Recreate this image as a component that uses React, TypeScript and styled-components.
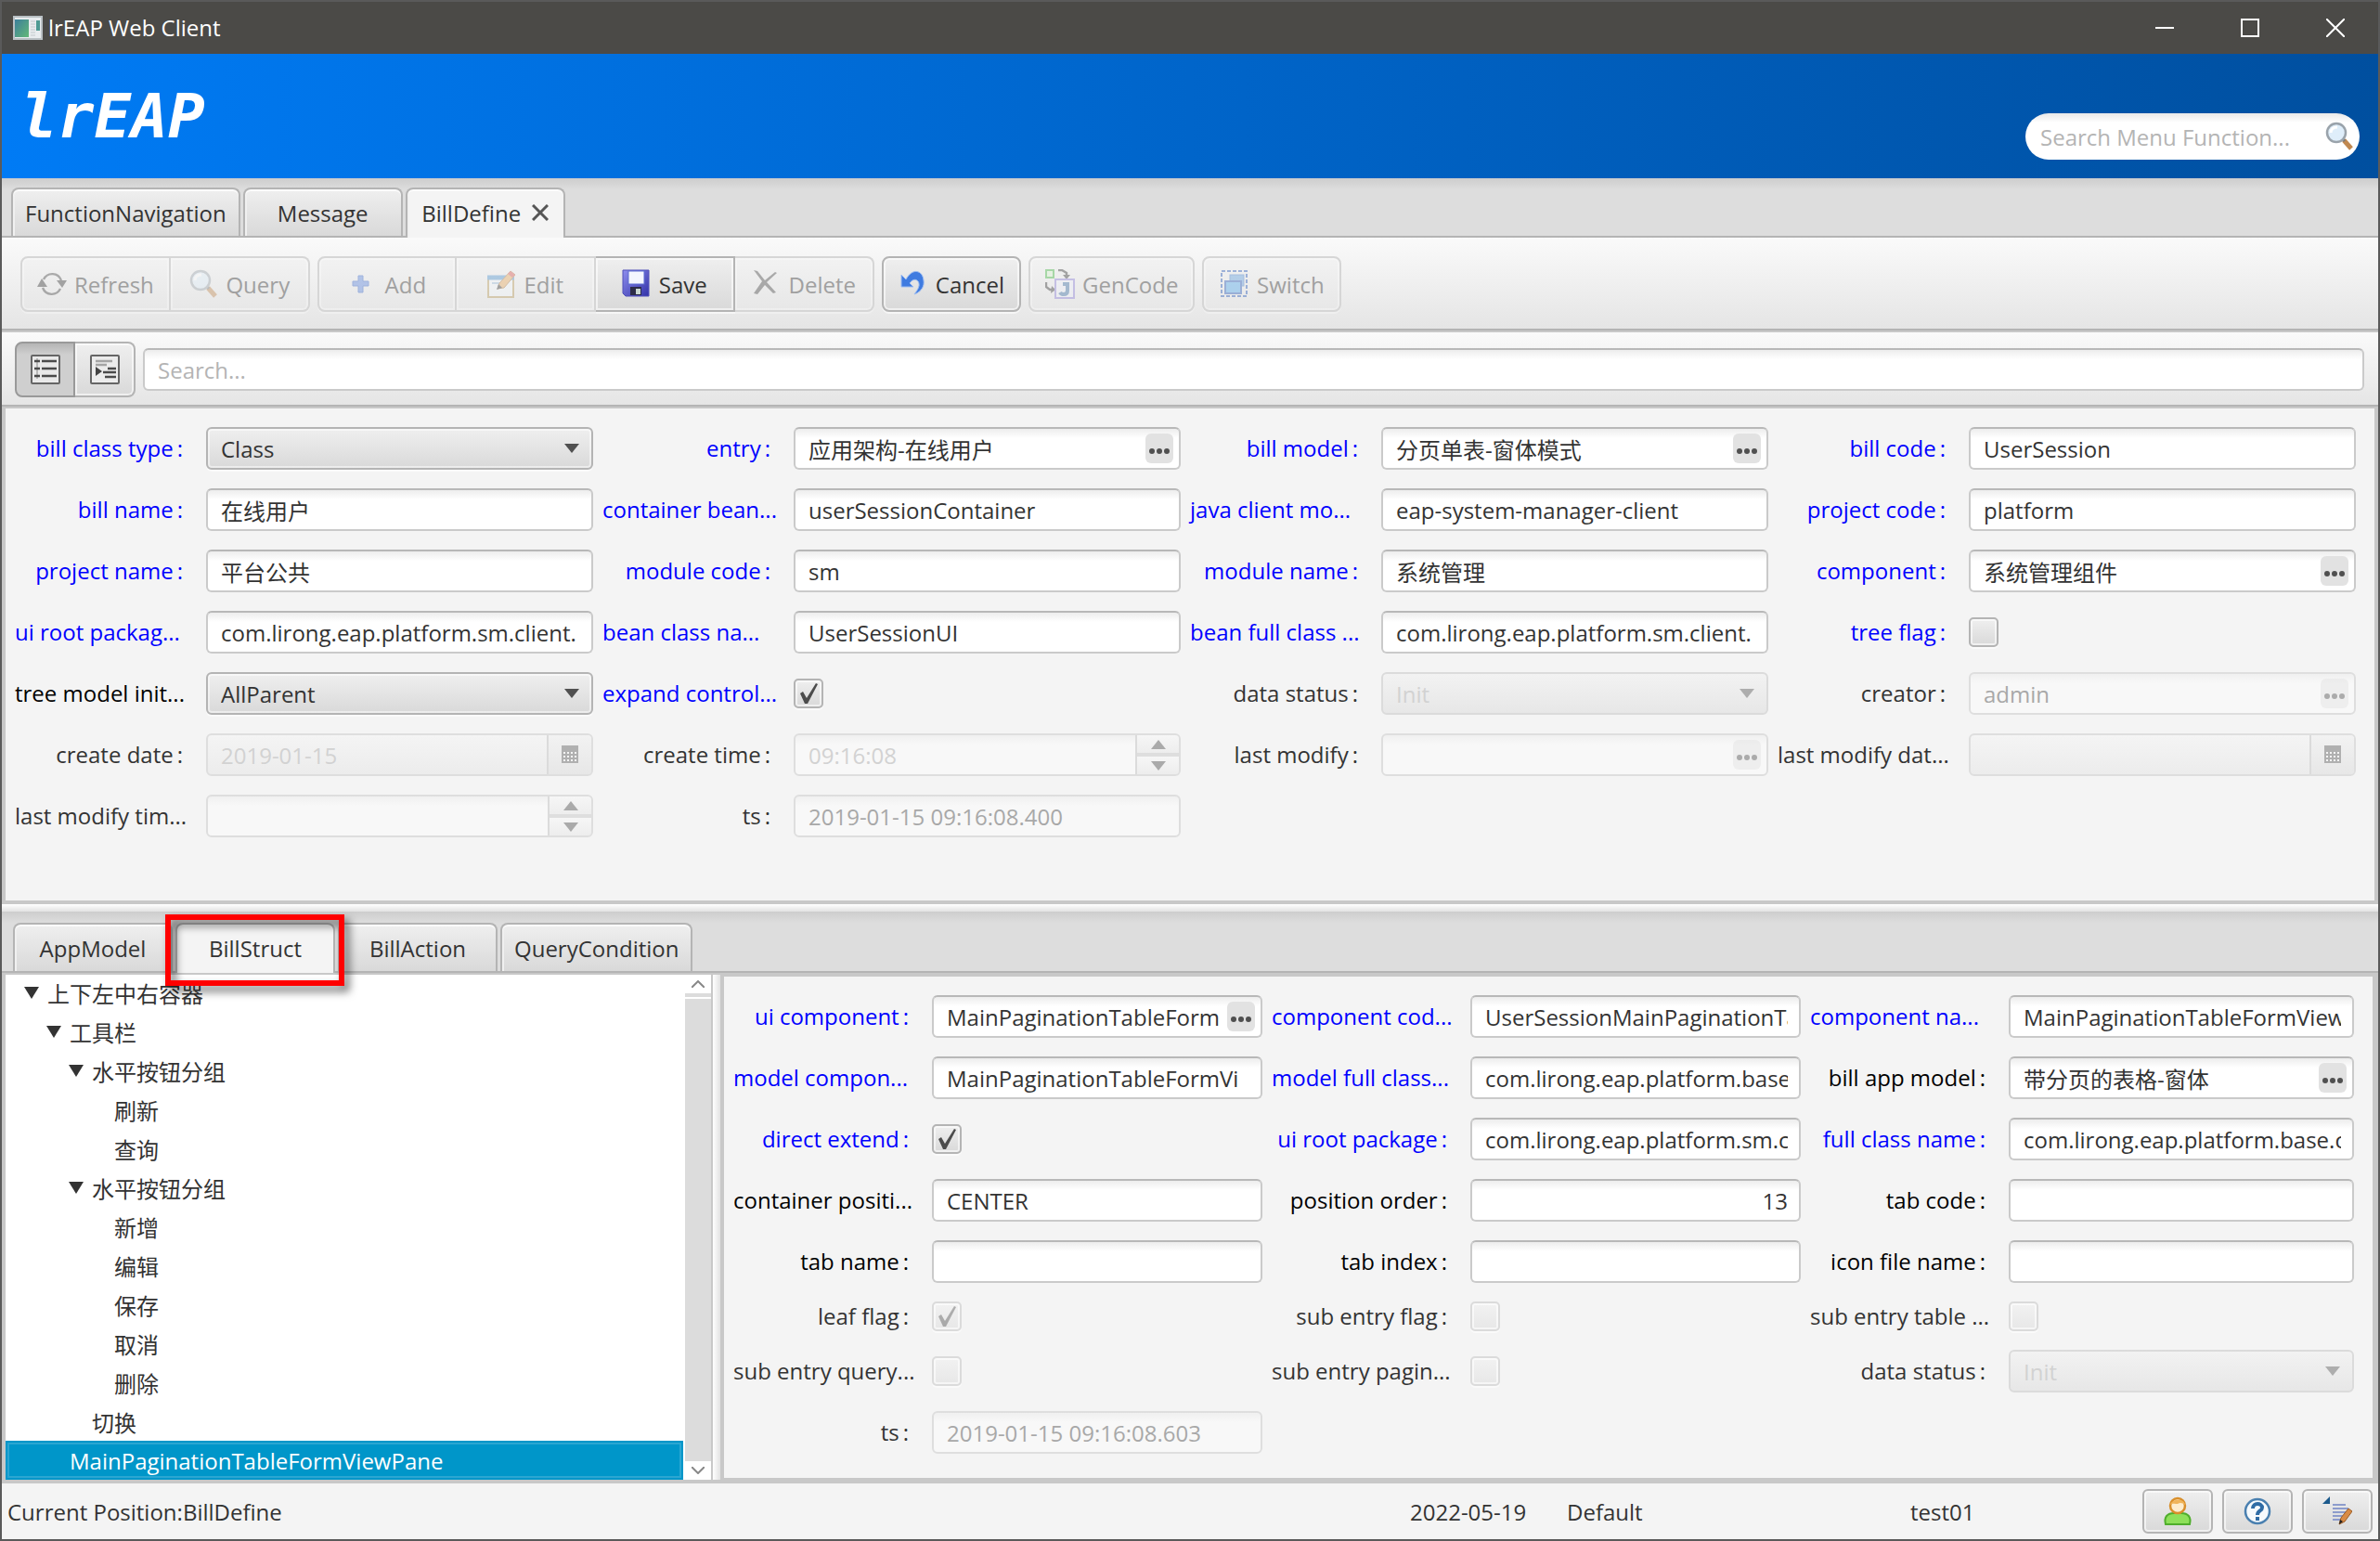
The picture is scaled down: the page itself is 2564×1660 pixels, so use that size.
import React, { useId } from 'react';
import styled, { createGlobalStyle, css } from 'styled-components';

const latin = '"Open Sans", "Noto Sans CJK SC", sans-serif';
const line = '#b4b4b4';
const edge = '#c8c8c8';
const pane = '#f4f4f4';
const raised = 'linear-gradient(#efefef, #d9d9d9)';
const faded = 'linear-gradient(#f2f2f2, #e7e7e7)';

const GlobalStyle = createGlobalStyle`
  * { box-sizing: border-box; }
  body { margin: 0; background: ${pane}; }
  body, button, input, select { font-family: ${latin}; font-size: 24px; color: #333; }
`;

const Window = styled.div`
  min-height: 100vh;
  display: flex;
  flex-direction: column;
  border: 2px solid #5a5a5a;
  background: ${pane};
`;

/* ---------- title bar and banner ---------- */

const TitleBar = styled.header`
  display: flex;
  align-items: center;
  gap: 6px;
  height: 56px;
  padding-left: 12px;
  background: #4b4a47;
  color: #fff;
`;

const TitleText = styled.h1`
  flex: 1;
  margin: 0;
  font-size: 24px;
  font-weight: 400;
  line-height: 32px;
`;

const WindowControls = styled.div`
  display: flex;
`;

const WindowButton = styled.button`
  width: 92px;
  height: 56px;
  padding: 0;
  border: 0;
  background: none;
  display: grid;
  place-items: center;
`;

const Banner = styled.div`
  display: flex;
  justify-content: space-between;
  height: 134px;
  padding: 20px;
  background: linear-gradient(90deg, #007bf5, #004f9f);
`;

const Logo = styled.div`
  font: italic 700 66px/96px "DejaVu Sans Mono", monospace;
  color: #fff;
`;

const MenuSearch = styled.label`
  align-self: flex-end;
  display: flex;
  align-items: center;
  width: 360px;
  height: 50px;
  padding: 0 6px 0 16px;
  border-radius: 25px;
  background: linear-gradient(#e8e8e8, #fff 10px);
`;

const BareInput = styled.input`
  flex: 1;
  min-width: 0;
  padding: 0;
  border: 0;
  outline: 0;
  background: none;
  &::placeholder { color: #b4b4b4; }
`;

/* ---------- tabs ---------- */

const TabStrip = styled.div<{ $lower?: boolean }>`
  display: flex;
  align-items: flex-end;
  gap: 3px;
  padding: ${p => (p.$lower ? '12px 12px 0' : '10px 10px 0')};
  border-bottom: 2px solid ${line};
  background: linear-gradient(#cdcdcd, #dddddd 12px);
`;

const Tab = styled.button<{ $selected?: boolean }>`
  display: flex;
  align-items: center;
  justify-content: center;
  gap: 12px;
  min-width: 172px;
  height: 52px;
  padding: 0 13px;
  border: 2px solid ${line};
  border-bottom: 0;
  border-radius: 8px 8px 0 0;
  background: ${raised};
  box-shadow: inset 0 2px #fbfbfb, inset 2px 0 #f0f0f0;
  ${p => p.$selected && css`
    height: 54px;
    margin-bottom: -2px;
    padding-bottom: 2px;
    background: ${pane};
  `}
`;

const TabAnchor = styled.div`
  position: relative;
  display: flex;
`;

const Highlight = styled.div`
  position: absolute;
  inset: -9px -10px -16px -11px;
  border: 6px solid #f00;
  filter: drop-shadow(5px 6px 5px rgba(0, 0, 0, 0.6));
  pointer-events: none;
  z-index: 2;
`;

/* ---------- toolbar ---------- */

const Toolbar = styled.div`
  display: flex;
  gap: 8px;
  height: 100px;
  padding: 20px;
  border-bottom: 2px solid ${line};
  background: linear-gradient(#fafafa, #e5e5e5);
`;

const ButtonGroup = styled.div`
  display: flex;
`;

const ToolButton = styled.button`
  display: flex;
  align-items: center;
  justify-content: center;
  gap: 8px;
  min-width: 150px;
  height: 60px;
  padding: 0 16px;
  border: 2px solid ${line};
  border-radius: 0;
  background: ${raised};
  box-shadow: inset 0 0 0 2px rgba(255, 255, 255, 0.6), 0 2px #f6f6f6;
  &:first-child { border-top-left-radius: 8px; border-bottom-left-radius: 8px; }
  &:last-child { border-top-right-radius: 8px; border-bottom-right-radius: 8px; }
  & + & { border-left: 0; }
  &:disabled {
    border-color: #d6d6d6;
    background: ${faded};
    box-shadow: inset 0 0 0 2px rgba(255, 255, 255, 0.3), 0 2px #efefef;
    color: #a0a0a0;
  }
  &:disabled svg { opacity: 0.4; }
`;

const FilterBar = styled.div`
  display: flex;
  align-items: center;
  gap: 8px;
  height: 82px;
  padding: 2px 15px 0 14px;
  border-top: 2px solid ${edge};
  border-bottom: 2px solid ${line};
  background: linear-gradient(#fafafa, #e5e5e5);
`;

const ModeButton = styled.button<{ $on?: boolean }>`
  display: grid;
  place-items: center;
  width: 65px;
  height: 60px;
  padding: 0;
  border: 2px solid ${line};
  border-radius: 0 8px 8px 0;
  background: ${raised};
  box-shadow: inset 0 0 0 2px rgba(255, 255, 255, 0.6);
  & + & { border-left: 0; }
  ${p => p.$on && css`
    border-color: #999;
    border-radius: 8px 0 0 8px;
    background: linear-gradient(#b5b5b5, #cfcfcf 12px);
    box-shadow: none;
  `}
`;

/* ---------- form controls ---------- */

const boxed = css`
  width: 100%;
  height: 46px;
  border: 2px solid #cacaca;
  border-top-color: #b8b8b8;
  border-radius: 6px;
`;

const Box = styled.div<{ $off?: boolean; $flat?: boolean }>`
  ${boxed}
  display: flex;
  align-items: center;
  flex: 1;
  min-width: 0;
  overflow: hidden;
  background: linear-gradient(#ededed, #fff 10px);
  ${p => p.$off && css`
    border-color: #dedede;
    background: ${p.$flat ? 'linear-gradient(#f4f4f4, #ececec)' : 'linear-gradient(#f0f0f0, #f8f8f8 10px)'};
  `}
`;

const TextInput = styled(BareInput)<{ $end?: boolean; $faint?: boolean; $tight?: boolean }>`
  height: 42px;
  margin-left: 14px;
  margin-right: ${p => (p.$tight ? '5px' : '12px')};
  text-align: ${p => (p.$end ? 'right' : 'left')};
  &:disabled { color: ${p => (p.$faint ? '#d2d2d2' : '#a8a8a8')}; }
`;

const MoreButton = styled.button`
  flex: none;
  display: grid;
  place-items: center;
  width: 30px;
  height: 32px;
  margin-right: 6px;
  padding: 6px 0 0;
  border: 0;
  border-radius: 6px;
  background: #e2e2e2;
  &:disabled { opacity: 0.45; }
`;

const SelectWrap = styled.div`
  flex: 1;
  min-width: 0;
  display: grid;
  align-items: center;
  & > * { grid-area: 1 / 1; }
  & > svg { justify-self: end; margin-right: 15px; pointer-events: none; }
`;

const Select = styled.select`
  ${boxed}
  appearance: none;
  padding: 0 14px;
  border-color: ${line};
  background: ${raised};
  box-shadow: inset 0 0 0 2px rgba(255, 255, 255, 0.5), 0 2px #fafafa;
  &:disabled {
    border-color: #dbdbdb;
    background: ${faded};
    box-shadow: none;
    color: #d2d2d2;
    opacity: 1;
  }
  &:disabled + svg { opacity: 0.4; }
`;

const SideButton = styled.button`
  flex: none;
  display: grid;
  place-items: center;
  width: 48px;
  height: 42px;
  padding: 0;
  border: 0;
  border-left: 2px solid #dbdbdb;
  background: ${faded};
`;

const Spinner = styled.div`
  flex: none;
  display: grid;
  grid-template-rows: 1fr 1fr;
  gap: 4px;
  width: 47px;
  height: 42px;
  border-left: 2px solid #dbdbdb;
  background: #dedede;
`;

const SpinButton = styled.button`
  display: grid;
  place-items: center;
  padding: 0;
  border: 0;
  background: linear-gradient(#f6f6f6, #ededed);
`;

const CheckWrap = styled.div`
  display: grid;
  width: 32px;
  height: 32px;
  & > * { grid-area: 1 / 1; }
  & > svg { pointer-events: none; }
`;

const Check = styled.input`
  appearance: none;
  width: 32px;
  height: 32px;
  margin: 0;
  border: 2px solid ${line};
  border-radius: 5px;
  background: ${raised};
  box-shadow: inset 0 0 0 2px rgba(255, 255, 255, 0.6), 0 2px #fafafa;
  &:disabled { border-color: #dbdbdb; background: ${faded}; }
  &:disabled + svg { opacity: 0.4; }
`;

const Form = styled.form<{ $columns: string; $foot: number }>`
  display: grid;
  grid-template-columns: ${p => p.$columns};
  gap: 20px 10px;
  align-content: start;
  padding: 20px 20px ${p => p.$foot}px 10px;
`;

const Cell = styled.div`
  display: flex;
  align-items: center;
  min-width: 0;
`;

type Tone = 'blue' | 'black' | 'grey';
const tones: Record<Tone, string> = { blue: '#0000ff', black: '#000', grey: '#333' };

const Label = styled.label<{ $tone: Tone; $cut: boolean; $wide?: boolean }>`
  flex: none;
  width: ${p => (p.$wide ? '214px' : '206px')};
  padding-right: ${p => (p.$cut ? '0' : '25px')};
  line-height: 32px;
  white-space: nowrap;
  text-align: ${p => (p.$cut ? 'left' : 'right')};
  color: ${p => tones[p.$tone]};
`;

const Colon = styled.span`
  margin-left: 4px;
`;

const TopForm = styled.section`
  border: solid ${edge};
  border-width: 2px 4px 4px;
`;

const HSplitter = styled.div`
  height: 8px;
  background: linear-gradient(#fff, #e2e2e2);
`;

/* ---------- lower area ---------- */

const Lower = styled.main`
  flex: 1;
  display: grid;
  grid-template-columns: minmax(0, 766fr) 8px minmax(0, 1786fr);
  border-top: 2px solid ${edge};
  border-bottom: 4px solid ${edge};
`;

const TreePane = styled.section`
  display: flex;
  border-left: 4px solid ${edge};
  border-right: 2px solid ${edge};
  background: #fff;
`;

const TreeList = styled.ul`
  flex: 1;
  display: flex;
  flex-direction: column;
  justify-content: flex-end;
  height: 544px;
  margin: 0;
  padding: 0;
  overflow: hidden;
  list-style: none;
`;

const TreeRow = styled.li<{ $level: number; $selected?: boolean }>`
  flex: none;
  display: flex;
  align-items: center;
  gap: 9px;
  height: 42px;
  padding-left: ${p => 20 + 24 * p.$level}px;
  ${p => p.$selected && css`
    margin-right: 2px;
    color: #fff;
    background: #0096c9;
    box-shadow: inset 0 0 0 2px #0096c9, inset 0 0 0 4px #2ba6d2;
  `}
`;

const ArrowSlot = styled.span`
  display: grid;
  place-items: center;
  width: 16px;
`;

const ScrollBar = styled.div`
  display: flex;
  flex-direction: column;
  width: 28px;
  background: #dcdcdc;
`;

const ScrollButton = styled.button`
  display: grid;
  place-items: center;
  height: 20px;
  padding: 0;
  border: 0;
  background: #fff;
`;

const ScrollThumb = styled.div`
  flex: 1;
  margin-top: 4px;
  border-top: 2px solid #fff;
`;

const VSplitter = styled.div`
  background: linear-gradient(90deg, #fff, #e2e2e2);
`;

const DetailPane = styled.section`
  border: solid ${edge};
  border-width: 2px 6px 2px 4px;
`;

const StatusBar = styled.footer`
  display: grid;
  grid-template-columns: 1511fr 169fr 370fr 250fr auto;
  align-items: center;
  height: 60px;
  padding: 0 6px;
`;

const StatusButtons = styled.div`
  display: flex;
  gap: 10px;
`;

const StatusButton = styled.button`
  display: grid;
  place-items: center;
  width: 76px;
  height: 48px;
  padding: 0;
  border: 2px solid ${line};
  border-radius: 6px;
  background: ${raised};
  box-shadow: inset 0 0 0 2px rgba(255, 255, 255, 0.6);
`;

/* ---------- drawings ---------- */

const Svg = ({ size = 32, children }: { size?: number; children: React.ReactNode }) => (
  <svg width={size} height={size} viewBox="0 0 32 32" fill="none" aria-hidden="true">{children}</svg>
);

const AppIcon = () => (
  <svg width="32" height="26" viewBox="0 0 32 26" aria-hidden="true">
    <defs>
      <linearGradient id="app" x1="0" y1="0" x2="1" y2="1">
        <stop offset="0" stopColor="#3c7f9c" /><stop offset="1" stopColor="#63b878" />
      </linearGradient>
    </defs>
    <rect x="1" y="1" width="30" height="24" fill="#e8ecef" stroke="#b9c0c4" strokeWidth="2" />
    <rect x="2" y="4" width="15" height="19" fill="url(#app)" />
    <path d="M19 6h5M19 9h5M19 12h5M19 15h5M19 18h5M19 21h5" stroke="#c2c8cc" />
    <rect x="25" y="5" width="4" height="11" fill="#4d9a93" />
  </svg>
);

const Magnifier = () => (
  <Svg>
    <path d="M21 20l8 9" stroke="#c08850" strokeWidth="5" />
    <path d="M19 18l3 3" stroke="#777" strokeWidth="3" />
    <circle cx="13" cy="12" r="10" fill="#dfeefa" stroke="#9aa3ab" strokeWidth="2.5" />
    <path d="M7 12c0-4 3-6 7-6" stroke="#fff" strokeWidth="3" />
  </Svg>
);

const RefreshIcon = () => (
  <Svg>
    <path d="M7 11A10.500 11 0 0 1 26 12M25 21A10.500 11 0 0 1 6 20" stroke="#444" strokeWidth="2.4" />
    <path d="M0 19l5-9 6 9zM21 12h11l-5 8z" fill="#333" />
  </Svg>
);

const AddIcon = () => (
  <Svg>
    <path d="M11 7h5v6h6v5h-6v7h-5v-7H5v-5h6z" fill="#5b86e0" stroke="#2f5fc4" />
  </Svg>
);

const EditIcon = () => (
  <Svg>
    <rect x="2" y="8" width="27" height="22" fill="#f3f8fc" stroke="#b89a58" strokeWidth="2" />
    <path d="M1 9h29" stroke="#4d93cf" strokeWidth="5" />
    <path d="M6 15h10" stroke="#9dbfdd" strokeWidth="2" />
    <path d="M12 21l2-6L26 2l5 4-12 14z" fill="#e9a95c" stroke="#a8763c" />
    <path d="M26 2l5 4-3 3-5-4z" fill="#d9534f" />
    <path d="M11 22l2-6 4 4z" fill="#333" />
  </Svg>
);

const SaveIcon = () => (
  <Svg>
    <defs>
      <linearGradient id="disk" x1="0" y1="0" x2="1" y2="1">
        <stop offset="0" stopColor="#8e8eee" /><stop offset="1" stopColor="#3232a8" />
      </linearGradient>
    </defs>
    <path d="M1 1h28v28H4l-3-3z" fill="url(#disk)" stroke="#5050b8" />
    <rect x="7" y="2" width="17" height="14" fill="#f4f6ff" stroke="#5c6cd0" />
    <rect x="9" y="19" width="12" height="9" fill="#2c2c48" />
    <rect x="15" y="21" width="5" height="6" fill="#c8d6d0" />
  </Svg>
);

const DeleteIcon = () => (
  <Svg>
    <path d="M2 1l4 1 8 10L25 3l2 1-11 10 10 11-3 1-9-9-8 10-4-1 9-13z" fill="#444" />
  </Svg>
);

const CancelIcon = () => (
  <Svg>
    <path d="M3 6v13h13l-4-4c5-7 11-3 10 3-1 4-3 6-5 9 8-3 11-9 10-15C26 1 15-2 8 11z" fill="#3f7be0" stroke="#9dbdf2" />
  </Svg>
);

const GenCodeIcon = () => (
  <Svg>
    <rect x="1" y="1" width="8" height="8" fill="#d8f5d0" stroke="#3db53d" strokeWidth="2" />
    <path d="M14 1h4l5 3v5M1 14v5l4 3h5" stroke="#333" strokeWidth="2.400" />
    <path d="M19 6h8l-4 5zM7 18l4 4-5 4z" fill="#333" />
    <rect x="11" y="11" width="20" height="20" fill="#eef0fb" stroke="#8b7ed8" strokeWidth="2" />
    <path d="M19 16h7M24 15v8q0 4-4 4-3 0-4-2" stroke="#3a6ea5" strokeWidth="4" />
  </Svg>
);

const SwitchIcon = () => (
  <Svg>
    <rect x="2" y="2" width="27" height="27" stroke="#2457b8" strokeWidth="2" strokeDasharray="4 2" />
    <rect x="11" y="6" width="15" height="12" fill="#5f9fe0" stroke="#3f78c6" />
    <rect x="6" y="13" width="17" height="13" fill="#4fa8ee" stroke="#2457b8" strokeWidth="2" />
  </Svg>
);

const ListIcon = () => (
  <svg width="34" height="32" viewBox="0 0 34 32" fill="none" aria-hidden="true">
    <rect x="2" y="1" width="30" height="30" rx="1" fill="#e9e9e9" stroke="#666" strokeWidth="2" />
    <path d="M8 4v22" stroke="#888" />
    <path d="M13 7h16M13 15h16M13 23h16M5 7h6M5 15h6M5 23h6" stroke="#4a4a4a" strokeWidth="2.400" />
  </svg>
);

const IndentIcon = () => (
  <svg width="34" height="32" viewBox="0 0 34 32" fill="none" aria-hidden="true">
    <rect x="2" y="1" width="30" height="30" rx="1" fill="#ececec" stroke="#666" strokeWidth="2" />
    <path d="M7 7h18M7 11h12" stroke="#a5a5a5" strokeWidth="2.400" />
    <path d="M20 15h9M15 19h14M17 24h12" stroke="#4a4a4a" strokeWidth="2.400" />
    <path d="M7 13l7 5-7 5z" fill="#444" />
  </svg>
);

const Caret = ({ w = 16, h = 10, up = false, fill = '#505050' }) => (
  <svg width={w} height={h} viewBox="0 0 16 10" preserveAspectRatio="none" aria-hidden="true">
    <path d={up ? 'M0 10h16L8 0z' : 'M0 0h16L8 10z'} fill={fill} />
  </svg>
);

const Dots = () => (
  <svg width="24" height="8" viewBox="0 0 24 8" fill="#505050" aria-hidden="true">
    <circle cx="4" cy="4" r="3" /><circle cx="12" cy="4" r="3" /><circle cx="20" cy="4" r="3" />
  </svg>
);

const CalendarIcon = () => (
  <svg width="18" height="20" viewBox="0 0 18 20" aria-hidden="true">
    <rect width="18" height="19" fill="#b0b0b0" />
    <path d="M2 8h14M2 12h14M2 16h14" stroke="#f4f4f4" strokeWidth="2" strokeDasharray="2 2" />
  </svg>
);

const CheckMark = () => (
  <Svg>
    <path d="M7 16l3-2 4 7L24 5l2 1-11 21h-3z" fill="#4c4c4c" />
  </Svg>
);

const UserIcon = () => (
  <Svg>
    <path d="M3 30c-2-8 2-12 9-12h8c7 0 11 4 9 12z" fill="#8ee05a" stroke="#4fae2c" strokeWidth="2" />
    <circle cx="16" cy="10" r="8" fill="#fdeccd" stroke="#d98f2b" strokeWidth="2.500" />
    <path d="M8 9c1-6 15-8 16 0-3-2-5-3-8-1-2 0-6-1-8 1z" fill="#f0b45a" />
  </Svg>
);

const HelpIcon = () => (
  <Svg>
    <circle cx="16" cy="16" r="13" fill="#f6fafd" stroke="#4a80b0" strokeWidth="2.500" />
    <path d="M11 13c0-7 10-6 10-1 0 4-5 3-5 8" stroke="#2f6ca5" strokeWidth="4" />
    <rect x="14" y="22" width="4" height="4" fill="#2f6ca5" />
  </Svg>
);

const NoteIcon = () => (
  <Svg>
    <path d="M0 8l8-8v8z" fill="#1c5a8c" />
    <path d="M11 9h14M11 13h17M11 17h15M11 21h11M11 25h9" stroke="#8d9ccc" strokeWidth="2" />
    <path d="M18 30l2-7 8-10 4 3-8 11z" fill="#d98b45" stroke="#9c5c24" />
    <path d="M18 30l1-5 3 2z" fill="#222" />
  </Svg>
);

/* ---------- fields ---------- */

type Kind = 'text' | 'lookup' | 'select' | 'check' | 'date' | 'time';
interface FieldSpec {
  label: string;
  kind?: Kind;
  value?: string;
  tone?: Tone;
  off?: boolean;
  end?: boolean;
  on?: boolean;
}

const Control = ({ id, spec }: { id: string; spec: FieldSpec }) => {
  const { kind = 'text', value = '', off, end, on } = spec;
  if (kind === 'check') {
    return (
      <CheckWrap>
        <Check id={id} type="checkbox" defaultChecked={on} disabled={off} />
        {on && <CheckMark />}
      </CheckWrap>
    );
  }
  if (kind === 'select') {
    return (
      <SelectWrap>
        <Select id={id} disabled={off} defaultValue={value}><option>{value}</option></Select>
        <Caret />
      </SelectWrap>
    );
  }
  return (
    <Box $off={off} $flat={kind === 'date'}>
      <TextInput
        id={id}
        defaultValue={value}
        disabled={off}
        $end={end}
        $tight={kind === 'lookup'}
        $faint={kind === 'date' || kind === 'time'}
      />
      {kind === 'lookup' && <MoreButton type="button" disabled={off} aria-label="Choose"><Dots /></MoreButton>}
      {kind === 'date' && <SideButton type="button" disabled aria-label="Calendar"><CalendarIcon /></SideButton>}
      {kind === 'time' && (
        <Spinner>
          <SpinButton type="button" disabled aria-label="Up"><Caret up fill="#aaa" /></SpinButton>
          <SpinButton type="button" disabled aria-label="Down"><Caret fill="#aaa" /></SpinButton>
        </Spinner>
      )}
    </Box>
  );
};

const Field = ({ spec, wide }: { spec: FieldSpec; wide?: boolean }) => {
  const id = useId();
  const cut = spec.label.endsWith('...');
  return (
    <Cell>
      <Label htmlFor={id} $tone={spec.tone ?? 'blue'} $cut={cut} $wide={wide}>
        {spec.label}{!cut && <Colon>:</Colon>}
      </Label>
      <Control id={id} spec={spec} />
    </Cell>
  );
};

const billFields: FieldSpec[] = [
  { label: 'bill class type', kind: 'select', value: 'Class' },
  { label: 'entry', kind: 'lookup', value: '应用架构-在线用户' },
  { label: 'bill model', kind: 'lookup', value: '分页单表-窗体模式' },
  { label: 'bill code', value: 'UserSession' },
  { label: 'bill name', value: '在线用户' },
  { label: 'container bean...', value: 'userSessionContainer' },
  { label: 'java client mo...', value: 'eap-system-manager-client' },
  { label: 'project code', value: 'platform' },
  { label: 'project name', value: '平台公共' },
  { label: 'module code', value: 'sm' },
  { label: 'module name', value: '系统管理' },
  { label: 'component', kind: 'lookup', value: '系统管理组件' },
  { label: 'ui root packag...', value: 'com.lirong.eap.platform.sm.client.' },
  { label: 'bean class na...', value: 'UserSessionUI' },
  { label: 'bean full class ...', value: 'com.lirong.eap.platform.sm.client.' },
  { label: 'tree flag', kind: 'check' },
  { label: 'tree model init...', kind: 'select', value: 'AllParent', tone: 'black' },
  { label: 'expand control...', kind: 'check', on: true },
  { label: 'data status', kind: 'select', value: 'Init', tone: 'grey', off: true },
  { label: 'creator', kind: 'lookup', value: 'admin', tone: 'grey', off: true },
  { label: 'create date', kind: 'date', value: '2019-01-15', tone: 'grey', off: true },
  { label: 'create time', kind: 'time', value: '09:16:08', tone: 'grey', off: true },
  { label: 'last modify', kind: 'lookup', tone: 'grey', off: true },
  { label: 'last modify dat...', kind: 'date', tone: 'grey', off: true },
  { label: 'last modify tim...', kind: 'time', tone: 'grey', off: true },
  { label: 'ts', value: '2019-01-15 09:16:08.400', tone: 'grey', off: true },
];

const structFields: FieldSpec[] = [
  { label: 'ui component', kind: 'lookup', value: 'MainPaginationTableForm' },
  { label: 'component cod...', value: 'UserSessionMainPaginationTable' },
  { label: 'component na...', value: 'MainPaginationTableFormViewPane' },
  { label: 'model compon...', value: 'MainPaginationTableFormVi' },
  { label: 'model full class...', value: 'com.lirong.eap.platform.base' },
  { label: 'bill app model', kind: 'lookup', value: '带分页的表格-窗体', tone: 'black' },
  { label: 'direct extend', kind: 'check', on: true },
  { label: 'ui root package', value: 'com.lirong.eap.platform.sm.client' },
  { label: 'full class name', value: 'com.lirong.eap.platform.base.client' },
  { label: 'container positi...', value: 'CENTER', tone: 'black' },
  { label: 'position order', value: '13', tone: 'black', end: true },
  { label: 'tab code', tone: 'black' },
  { label: 'tab name', tone: 'black' },
  { label: 'tab index', tone: 'black' },
  { label: 'icon file name', tone: 'black' },
  { label: 'leaf flag', kind: 'check', tone: 'grey', off: true, on: true },
  { label: 'sub entry flag', kind: 'check', tone: 'grey', off: true },
  { label: 'sub entry table ...', kind: 'check', tone: 'grey', off: true },
  { label: 'sub entry query...', kind: 'check', tone: 'grey', off: true },
  { label: 'sub entry pagin...', kind: 'check', tone: 'grey', off: true },
  { label: 'data status', kind: 'select', value: 'Init', tone: 'grey', off: true },
  { label: 'ts', value: '2019-01-15 09:16:08.603', tone: 'grey', off: true },
];

interface Node { text: string; level: number; open?: boolean; selected?: boolean }
const nodes: Node[] = [
  { text: '上下左中右容器', level: 0, open: true },
  { text: '工具栏', level: 1, open: true },
  { text: '水平按钮分组', level: 2, open: true },
  { text: '刷新', level: 3 },
  { text: '查询', level: 3 },
  { text: '水平按钮分组', level: 2, open: true },
  { text: '新增', level: 3 },
  { text: '编辑', level: 3 },
  { text: '保存', level: 3 },
  { text: '取消', level: 3 },
  { text: '删除', level: 3 },
  { text: '切换', level: 2 },
  { text: 'MainPaginationTableFormViewPane', level: 1, selected: true },
];

export default function App() {
  return (
    <>
      <GlobalStyle />
      <Window>
        <TitleBar>
          <AppIcon />
          <TitleText>lrEAP Web Client</TitleText>
          <WindowControls>
            <WindowButton aria-label="Minimize">
              <svg width="20" height="20"><path d="M0 10h20" stroke="#fff" strokeWidth="2" /></svg>
            </WindowButton>
            <WindowButton aria-label="Maximize">
              <svg width="20" height="20"><rect x="1" y="1" width="18" height="18" fill="none" stroke="#fff" strokeWidth="2" /></svg>
            </WindowButton>
            <WindowButton aria-label="Close">
              <svg width="20" height="20"><path d="M0 0l20 20M20 0L0 20" stroke="#fff" strokeWidth="2" /></svg>
            </WindowButton>
          </WindowControls>
        </TitleBar>

        <Banner>
          <Logo>lrEAP</Logo>
          <MenuSearch>
            <BareInput placeholder="Search Menu Function..." aria-label="Search menu function" />
            <Magnifier />
          </MenuSearch>
        </Banner>

        <TabStrip role="tablist">
          <Tab role="tab">FunctionNavigation</Tab>
          <Tab role="tab">Message</Tab>
          <Tab role="tab" $selected>
            BillDefine
            <svg width="18" height="18" aria-hidden="true"><path d="M1 1l16 16M17 1L1 17" stroke="#555" strokeWidth="3" /></svg>
          </Tab>
        </TabStrip>

        <Toolbar>
          <ButtonGroup>
            <ToolButton disabled><RefreshIcon />Refresh</ToolButton>
            <ToolButton disabled><Magnifier />Query</ToolButton>
          </ButtonGroup>
          <ButtonGroup>
            <ToolButton disabled><AddIcon />Add</ToolButton>
            <ToolButton disabled><EditIcon />Edit</ToolButton>
            <ToolButton><SaveIcon />Save</ToolButton>
            <ToolButton disabled><DeleteIcon />Delete</ToolButton>
          </ButtonGroup>
          <ButtonGroup><ToolButton><CancelIcon />Cancel</ToolButton></ButtonGroup>
          <ButtonGroup><ToolButton disabled><GenCodeIcon />GenCode</ToolButton></ButtonGroup>
          <ButtonGroup><ToolButton disabled><SwitchIcon />Switch</ToolButton></ButtonGroup>
        </Toolbar>

        <FilterBar>
          <ButtonGroup>
            <ModeButton $on aria-label="List view"><ListIcon /></ModeButton>
            <ModeButton aria-label="Indented view"><IndentIcon /></ModeButton>
          </ButtonGroup>
          <Box><TextInput placeholder="Search..." aria-label="Search" /></Box>
        </FilterBar>

        <TopForm>
          <Form $columns="repeat(4, minmax(0, 1fr))" $foot={68}>
            {billFields.map(f => <Field key={f.label} spec={f} />)}
          </Form>
        </TopForm>
        <HSplitter />

        <TabStrip role="tablist" $lower>
          <Tab role="tab">AppModel</Tab>
          <TabAnchor>
            <Tab role="tab" $selected>BillStruct</Tab>
            <Highlight />
          </TabAnchor>
          <Tab role="tab">BillAction</Tab>
          <Tab role="tab">QueryCondition</Tab>
        </TabStrip>

        <Lower>
          <TreePane>
            <TreeList role="tree">
              {nodes.map((n, i) => (
                <TreeRow key={i} role="treeitem" $level={n.level} $selected={n.selected}>
                  <ArrowSlot>{n.open && <Caret h={13} fill="#333" />}</ArrowSlot>
                  {n.text}
                </TreeRow>
              ))}
            </TreeList>
            <ScrollBar>
              <ScrollButton aria-label="Scroll up">
                <svg width="14" height="8"><path d="M0 8l7-7 7 7" fill="none" stroke="#888" strokeWidth="2" /></svg>
              </ScrollButton>
              <ScrollThumb />
              <ScrollButton aria-label="Scroll down">
                <svg width="14" height="8"><path d="M0 0l7 7 7-7" fill="none" stroke="#888" strokeWidth="2" /></svg>
              </ScrollButton>
            </ScrollBar>
          </TreePane>
          <VSplitter />
          <DetailPane>
            <Form $columns="minmax(0, 570fr) minmax(0, 570fr) minmax(0, 586fr)" $foot={20}>
              {structFields.map(f => <Field key={f.label} spec={f} wide />)}
            </Form>
          </DetailPane>
        </Lower>

        <StatusBar>
          <span>Current Position:BillDefine</span>
          <span>2022-05-19</span>
          <span>Default</span>
          <span>test01</span>
          <StatusButtons>
            <StatusButton aria-label="User"><UserIcon /></StatusButton>
            <StatusButton aria-label="Help"><HelpIcon /></StatusButton>
            <StatusButton aria-label="Notes"><NoteIcon /></StatusButton>
          </StatusButtons>
        </StatusBar>
      </Window>
    </>
  );
}
